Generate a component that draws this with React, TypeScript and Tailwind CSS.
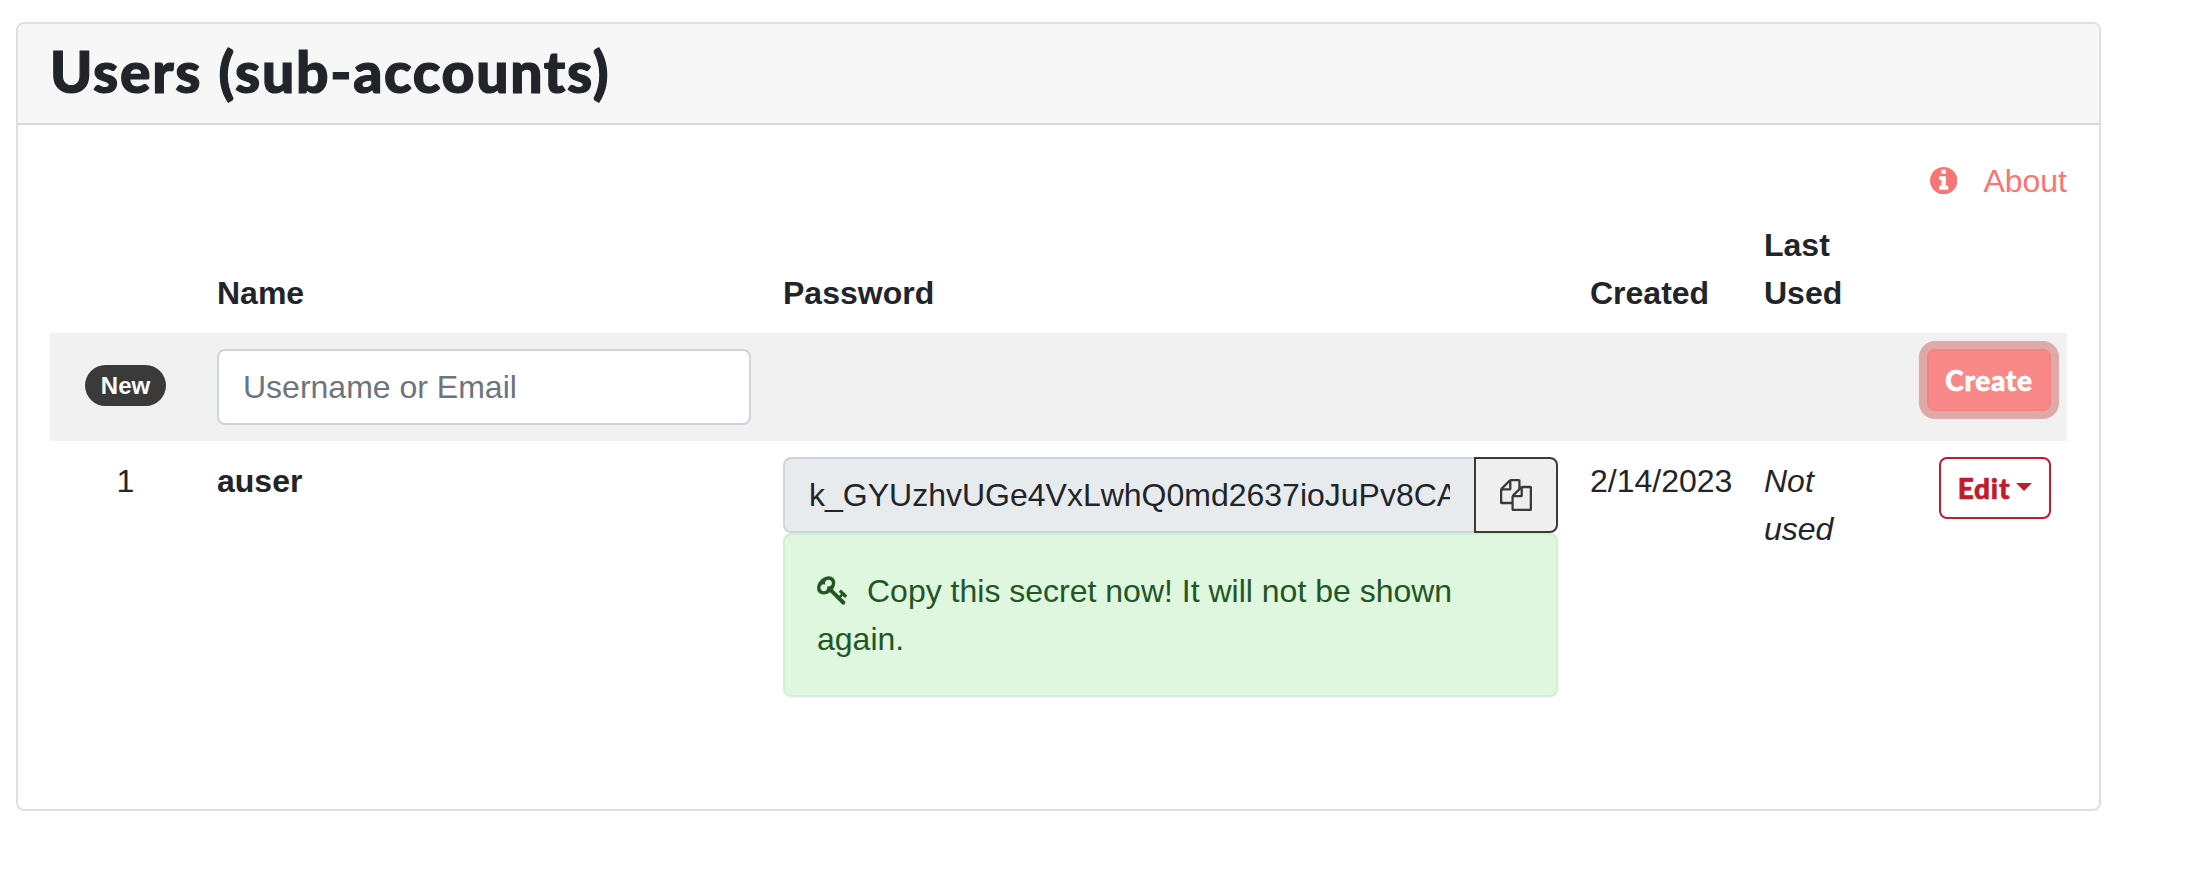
import React from "react";

const COLUMNS = "grid grid-cols-[151px_566px_807px_174px_163px_156px]";

function InfoIcon() {
  return (
    <svg viewBox="128 128 1536 1536" className="mt-[9.5px] size-[27.4px] fill-current">
      <path d="M1152 1376v-160q0-14-9-23t-23-9h-96v-512q0-14-9-23t-23-9h-320q-14 0-23 9t-9 23v160q0 14 9 23t23 9h96v320h-96q-14 0-23 9t-9 23v160q0 14 9 23t23 9h448q14 0 23-9t9-23zm-128-896v-160q0-14-9-23t-23-9h-192q-14 0-23 9t-9 23v160q0 14 9 23t23 9h192q14 0 23-9t9-23zm640 416q0 209-103 385.5t-279.5 279.5-385.5 103-385.5-103-279.5-279.5-103-385.5 103-385.5 279.5-279.5 385.5-103 385.5 103 279.5 279.5 103 385.5z" />
    </svg>
  );
}

function CopyIcon() {
  return (
    <svg viewBox="0 0 1792 1792" className="size-8 fill-current">
      <path d="M1696 384q40 0 68 28t28 68v1216q0 40-28 68t-68 28h-960q-40 0-68-28t-28-68v-288h-544q-40 0-68-28t-28-68v-672q0-40 20-88t48-76l408-408q28-28 76-48t88-20h416q40 0 68 28t28 68v328q68-40 128-40h416zm-544 213l-299 299h299v-299zm-640-384l-299 299h299v-299zm196 647l316-316v-416h-384v416q0 40-28 68t-68 28h-416v640h512v-256q0-40 20-88t48-76zm956 804v-1152h-384v416q0 40-28 68t-68 28h-416v640h896z" />
    </svg>
  );
}

function KeyIcon() {
  return (
    <svg viewBox="0 0 1792 1792" className="mr-[18px] -mt-2 inline-block size-8 overflow-visible fill-current align-middle">
      <path d="M832 512q0-80-56-136t-136-56-136 56-56 136q0 42 19 83-41-19-83-19-80 0-136 56t-56 136 56 136 136 56 136-56 56-136q0-42-19-83 41 19 83 19 80 0 136-56t56-136zm851 704q0 17-49 66t-66 49q-9 0-28.5-16t-36.5-33-38.5-40-24.5-26l-96 96 220 220q28 28 28 68 0 42-39 81t-81 39q-40 0-68-28l-671-671q-176 131-365 131-163 0-265.5-102.5t-102.5-265.5q0-160 95-313t248-248 313-95q163 0 265.5 102.5t102.5 265.5q0 189-131 365l355 355 96-96q-3-3-26-24.5t-40-38.5-33-36.5-16-28.5q0-17 49-66t66-49q13 0 23 10 6 6 46 44.5t82 79.5 86.5 86 73 78 28.5 41z" />
    </svg>
  );
}

function TableHead() {
  return (
    <div className={`${COLUMNS} items-end py-4 font-bold`}>
      <div />
      <div className="px-4">Name</div>
      <div className="px-4">Password</div>
      <div className="px-4">Created</div>
      <div className="px-4">
        Last
        <br />
        Used
      </div>
      <div />
    </div>
  );
}

function NewUserRow() {
  return (
    <div className={`${COLUMNS} h-[108px] items-start bg-[#f1f1f1] py-4`}>
      <div className="flex h-[73px] items-center justify-center">
        <span className="flex h-[41px] w-[81px] items-center justify-center rounded-full bg-[#3a3a3a] text-[24px] leading-6 font-bold text-white">
          New
        </span>
      </div>
      <div className="px-4">
        <input
          placeholder="Username or Email"
          className="block h-[76px] w-full rounded-lg border-2 border-[#ced4da] bg-white px-6 placeholder:text-[#6c757d]"
        />
      </div>
      <div />
      <div />
      <div />
      <div className="px-4">
        <button className="flex h-[62px] w-full items-center justify-center rounded-lg border-2 border-[#fa7f7f] bg-[#f88988] font-[Lato,sans-serif] text-[28px] leading-none font-black tracking-[0.7px] text-white ring-8 ring-[#e0a9a9] [-webkit-text-stroke:0.6px_currentColor]">
          Create
        </button>
      </div>
    </div>
  );
}

function UserRow() {
  return (
    <div className={`${COLUMNS} items-start py-4`}>
      <div className="text-center">1</div>
      <div className="px-4 font-bold">auser</div>
      <div className="px-4">
        <div className="flex h-[76px]">
          <input
            readOnly
            value="k_GYUzhvUGe4VxLwhQ0md2637ioJuPv8CA"
            className="w-[693px] shrink-0 rounded-l-lg border-2 border-[#ced4da] bg-[#e8ebee] px-6"
          />
          <button
            aria-label="Copy"
            className="z-10 -ml-0.5 flex w-[84px] items-center justify-center rounded-r-lg border-2 border-[#3a3a3a] bg-[#efefef] text-[#3a3a3a]"
          >
            <CopyIcon />
          </button>
        </div>
        <div className="rounded-lg border-2 border-[#cdf3ce] bg-[#dff6df] p-8 text-[#225723]">
          <KeyIcon />
          Copy this secret now! It will not be shown again.
        </div>
      </div>
      <div className="px-4 whitespace-nowrap">2/14/2023</div>
      <div className="px-4 italic">
        Not
        <br />
        used
      </div>
      <div className="flex justify-end px-4">
        <button className="flex h-[62px] w-[112px] items-center justify-center rounded-lg border-2 border-[#c01c2c] font-[Lato,sans-serif] text-[28px] leading-none font-black tracking-[0.8px] text-[#c01c2c] [-webkit-text-stroke:0.6px_currentColor]">
          Edit
          <svg viewBox="0 0 16 8" className="-mt-[3px] ml-[6px] h-2 w-4 fill-current">
            <path d="M0 0h16L8 8z" />
          </svg>
        </button>
      </div>
    </div>
  );
}

export default function App() {
  return (
    <main className="h-[880px] bg-white pt-[22px] pl-4 font-['Liberation_Sans',Arial,sans-serif] text-[32px] leading-[48px] text-[#212529]">
      <section className="h-[789px] w-[2085px] overflow-hidden rounded-lg border-2 border-[#dfdfdf] bg-white">
        <header className="flex h-[101px] items-center border-b-2 border-[#d9d9d9] bg-[#f7f7f7] px-8 pb-1">
          <h1 className="font-[Lato,sans-serif] text-[57px] leading-none font-black tracking-[1.7px] [word-spacing:1px] [-webkit-text-stroke:1.2px_currentColor]">
            Users (sub-accounts)
          </h1>
        </header>
        <div className="px-8 pt-8">
          <div className="flex h-12 justify-end gap-[26px] text-[#f87575]">
            <InfoIcon />
            <a>About</a>
          </div>
          <div className="w-[2017px]">
            <TableHead />
            <NewUserRow />
            <UserRow />
          </div>
        </div>
      </section>
    </main>
  );
}
